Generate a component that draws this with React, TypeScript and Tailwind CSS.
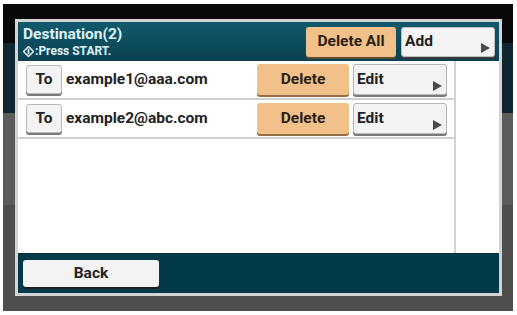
import React from "react"

const font = { fontFamily: "Roboto, 'Liberation Sans', sans-serif" }

function Arrow() {
  return (
    <svg width="9" height="10" viewBox="0 0 9 10" className="absolute right-[4px] bottom-[3px]">
      <path d="M0 0 L9 5 L0 10 Z" fill="#4a4a4a" />
    </svg>
  )
}

function StartIcon() {
  return (
    <svg width="11" height="11" viewBox="0 0 10 10" className="mr-[1px]">
      <path d="M5 0.5 L9.5 5 L5 9.5 L0.5 5 Z" fill="none" stroke="#dff3f7" strokeWidth="1.4" />
      <path d="M5 2.5 V7.5" stroke="#dff3f7" strokeWidth="1.6" />
    </svg>
  )
}

function Row({ email }: { email: string }) {
  return (
    <div className="flex h-[39px] items-center border-b-2 border-[#d0d0d0] pl-[8px]">
      <button className="h-[29px] w-[36px] rounded-[3px] border border-[#b8b8b8] bg-[#f3f3f3] text-[15.5px] font-bold text-[#222] shadow-[0_2px_0_#7a7a7a]">
        To
      </button>
      <span className="ml-[4px] flex-1 text-[15.5px] font-bold text-[#222]">{email}</span>
      <button className="mr-[4px] h-[31px] w-[92px] rounded-[3px] bg-[#f1c189] text-[15.5px] font-bold text-[#2a2016] shadow-[0_2px_0_#8f6e48]">
        Delete
      </button>
      <button className="relative mr-[7px] h-[31px] w-[94px] rounded-[3px] border border-[#b8b8b8] bg-[#f3f3f3] pl-[3px] text-left text-[15.5px] font-bold text-[#222] shadow-[0_2px_0_#7a7a7a]">
        Edit
        <Arrow />
      </button>
    </div>
  )
}

export default function App() {
  return (
    <div className="h-[315px] w-[517px] bg-white pb-[4px] pl-[3px] pr-[4px] pt-[4px]" style={font}>
      <div className="relative h-full w-full overflow-hidden">
        {/* backdrop */}
        <div className="flex h-full flex-col">
          <div className="h-[39px] bg-[#090909]" />
          <div className="h-[70px] bg-[#0f2730]" />
          <div className="h-[92px] bg-[#5c5c5c]" />
          <div className="flex-1 bg-[#4e4e4e]" />
        </div>

        {/* dialog */}
        <div className="absolute left-[12px] top-[15px] flex h-[277px] w-[487px] flex-col border-[3px] border-[#d4d4d4] bg-white">
          <div className="flex h-[39px] items-start bg-gradient-to-b from-[#12596d] to-[#0a4252] pl-[5px] pr-[4px]">
            <div className="flex-1 pt-[3px] text-[#dff3f7]">
              <div className="text-[15.5px] font-bold leading-[19px]">Destination(2)</div>
              <div className="flex items-center text-[12px] font-bold leading-[14px]">
                <StartIcon />
                :Press START.
              </div>
            </div>
            <button className="mt-[5px] h-[30px] w-[90px] rounded-[3px] bg-[#f1c189] text-[15.5px] font-bold text-[#2a2016] shadow-[0_2px_0_#5e4a32]">
              Delete All
            </button>
            <button className="relative ml-[5px] mt-[5px] h-[30px] w-[94px] rounded-[3px] border border-[#c0c0c0] bg-[#f3f3f3] pl-[3px] text-left text-[15.5px] font-bold text-[#222] shadow-[0_2px_0_#3a3a3a]">
              Add
              <Arrow />
            </button>
          </div>

          <div className="flex flex-1">
            <div className="w-[438px] border-r-2 border-[#d4d4d4]">
              <Row email="example1@aaa.com" />
              <Row email="example2@abc.com" />
            </div>
            <div className="flex-1" />
          </div>

          <div className="h-[40px] border-t border-[#0a2f3a] bg-[#033a4a] pl-[5px] pt-[6px]">
            <button className="h-[27px] w-[136px] rounded-[3px] bg-[#f3f3f3] text-[15.5px] font-bold text-[#222] shadow-[0_2px_0_#1e1e1e]">
              Back
            </button>
          </div>
        </div>
      </div>
    </div>
  )
}
